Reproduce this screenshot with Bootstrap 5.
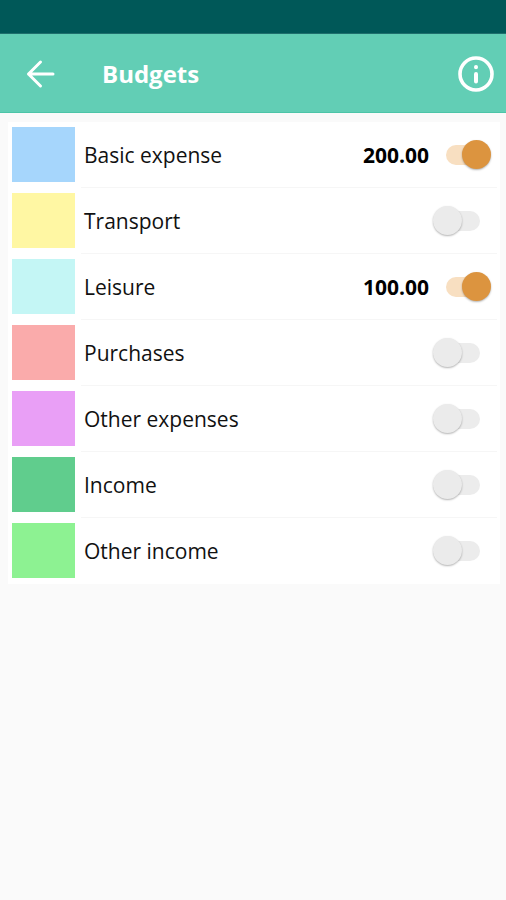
<!DOCTYPE html>
<html lang="en">
<head>
<meta charset="utf-8">
<meta name="viewport" content="width=device-width, initial-scale=1">
<title>Budgets</title>
<link href="https://cdn.jsdelivr.net/npm/bootstrap@5.3.0/dist/css/bootstrap.min.css" rel="stylesheet">
<style>
body { background: #fafafa; font-family: "Open Sans", "Noto Sans", sans-serif; color: #111; }
.status-strip { height: 34px; background: #005858; border-bottom: 1px solid #1f6f6d; }
.app-bar { height: 79px; background: #62ceb5; border-bottom: 1px solid #4cc5a8; padding: 2px 12px 0 22px; }
.app-title { font-size: 24px; line-height: 32px; margin-left: 44px; }
.budget-list { margin: 9px 6px 0 8px; background: #fff; }
.budget-row { height: 66px; padding-left: 4px; }
.swatch { width: 63px; height: 55px; margin-top: 5px; }
.row-body { border-bottom: 1px solid #f6f6f6; margin-left: 6px; margin-right: 3px; padding: 0 6px 0 3px; }
.budget-row:last-child .row-body { border-color: transparent; }
.row-name, .row-amount { font-size: 21px; line-height: 28px; }
.row-amount { margin-right: 4px; color: #000; }
.toggle { appearance: none; display: grid; align-items: center; width: 58px; height: 30px; margin: 0; cursor: pointer; }
.toggle::before, .toggle::after { content: ""; grid-area: 1 / 1; }
.toggle::before { width: 34px; height: 20px; margin-left: 13px; border-radius: 10px; background: #ececec; }
.toggle::after { width: 29px; height: 29px; border-radius: 50%; background: #ebebeb; box-shadow: 0 1px 2px rgba(0,0,0,.3); }
.toggle:checked::before { background: #f8dfc1; }
.toggle:checked::after { background: #dc943f; justify-self: end; }
.c-basic { background: #a6d6fc; }
.c-transport { background: #fff7a3; }
.c-leisure { background: #c4f6f5; }
.c-purchases { background: #faabab; }
.c-expenses { background: #e99ff6; }
.c-income { background: #60cd8d; }
.c-other { background: #8df292; }
</style>
<script src="https://cdn.jsdelivr.net/npm/bootstrap@5.3.0/dist/js/bootstrap.bundle.min.js" defer></script>
</head>
<body>
<div class="status-strip"></div>
<header class="app-bar d-flex align-items-center text-white">
  <button type="button" class="btn p-0 border-0 text-white d-flex" aria-label="Back">
    <svg width="36" height="36" viewBox="0 0 36 36" fill="none" stroke="currentColor" stroke-width="3" stroke-linecap="round" stroke-linejoin="round"><path d="M31 18H6.500M18.500 6 6.500 18l12 12"/></svg>
  </button>
  <h1 class="app-title fw-bold mb-0 flex-grow-1">Budgets</h1>
  <button type="button" class="btn p-0 border-0 text-white d-flex" aria-label="Information">
    <svg width="36" height="36" viewBox="0 0 36 36" fill="none" stroke="currentColor" stroke-linecap="round"><circle cx="18" cy="18" r="16" stroke-width="3.600"/><path d="M18 18v7.500M18 11v.200" stroke-width="4"/></svg>
  </button>
</header>
<main>
  <ul class="budget-list list-unstyled mb-0">
    <li class="budget-row d-flex"><span class="swatch c-basic flex-shrink-0"></span><div class="row-body d-flex flex-grow-1 align-items-center"><label class="row-name flex-grow-1" for="b1">Basic expense</label><span class="row-amount fw-bold">200.00</span><input class="toggle" type="checkbox" role="switch" id="b1" checked></div></li>
    <li class="budget-row d-flex"><span class="swatch c-transport flex-shrink-0"></span><div class="row-body d-flex flex-grow-1 align-items-center"><label class="row-name flex-grow-1" for="b2">Transport</label><input class="toggle" type="checkbox" role="switch" id="b2"></div></li>
    <li class="budget-row d-flex"><span class="swatch c-leisure flex-shrink-0"></span><div class="row-body d-flex flex-grow-1 align-items-center"><label class="row-name flex-grow-1" for="b3">Leisure</label><span class="row-amount fw-bold">100.00</span><input class="toggle" type="checkbox" role="switch" id="b3" checked></div></li>
    <li class="budget-row d-flex"><span class="swatch c-purchases flex-shrink-0"></span><div class="row-body d-flex flex-grow-1 align-items-center"><label class="row-name flex-grow-1" for="b4">Purchases</label><input class="toggle" type="checkbox" role="switch" id="b4"></div></li>
    <li class="budget-row d-flex"><span class="swatch c-expenses flex-shrink-0"></span><div class="row-body d-flex flex-grow-1 align-items-center"><label class="row-name flex-grow-1" for="b5">Other expenses</label><input class="toggle" type="checkbox" role="switch" id="b5"></div></li>
    <li class="budget-row d-flex"><span class="swatch c-income flex-shrink-0"></span><div class="row-body d-flex flex-grow-1 align-items-center"><label class="row-name flex-grow-1" for="b6">Income</label><input class="toggle" type="checkbox" role="switch" id="b6"></div></li>
    <li class="budget-row d-flex"><span class="swatch c-other flex-shrink-0"></span><div class="row-body d-flex flex-grow-1 align-items-center"><label class="row-name flex-grow-1" for="b7">Other income</label><input class="toggle" type="checkbox" role="switch" id="b7"></div></li>
  </ul>
</main>
</body>
</html>
